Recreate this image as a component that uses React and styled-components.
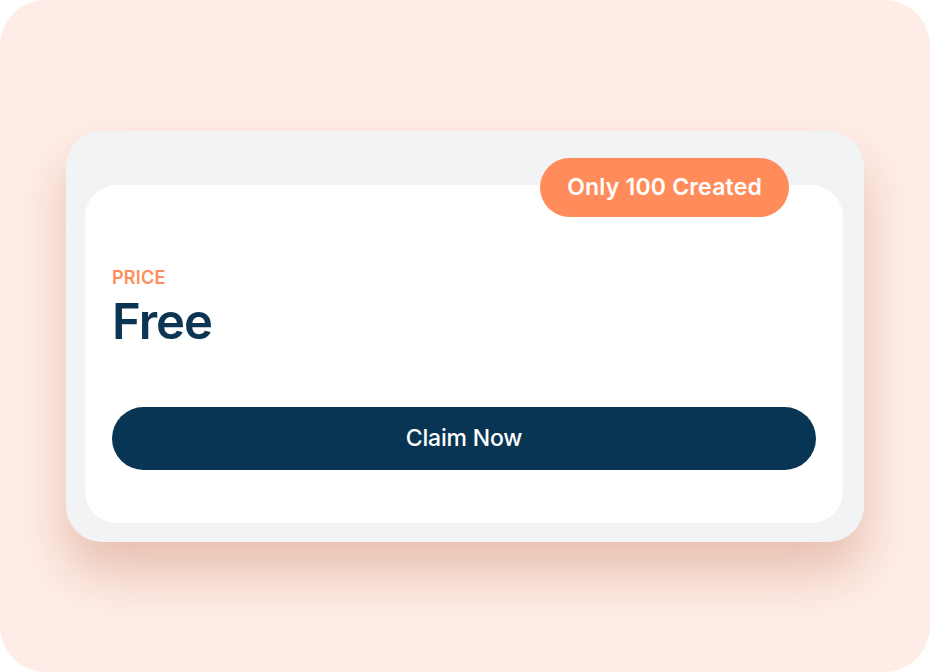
import React from 'react';
import styled, { createGlobalStyle } from 'styled-components';

const GlobalStyle = createGlobalStyle`
    html, body {
        margin: 0;
        padding: 0;
        background: #ffffff;
    }
    * {
        box-sizing: border-box;
    }
`;

const StyledFrame = styled.div`
    width: 930px;
    height: 672px;
    border-radius: 46px;
    background: #feede6;
    display: flex;
    align-items: center;
    justify-content: center;
    font-family: Inter, "Noto Sans", sans-serif;
`;

const StyledCard = styled.div`
    position: relative;
    width: 798px;
    height: 411px;
    padding: 54px 21px 19px 19px;
    border-radius: 36px;
    background: #f2f3f5;
    box-shadow: 0 30px 50px rgba(190, 110, 80, 0.36);
`;

const StyledBadge = styled.span`
    position: absolute;
    top: 27px;
    right: 75px;
    height: 59px;
    padding: 0 27px;
    display: flex;
    align-items: center;
    border-radius: 30px;
    background: #ff8c5a;
    color: #fff;
    font-size: 23px;
    font-weight: 600;
    letter-spacing: 0.2px;
`;

const StyledInner = styled.div`
    height: 100%;
    padding: 82px 27px 53px 27px;
    border-radius: 32px;
    background: #ffffff;
    display: flex;
    flex-direction: column;
`;

const StyledLabel = styled.p`
    margin: 0;
    font-size: 18px;
    line-height: 22px;
    font-weight: 600;
    color: #ff8c5a;
    letter-spacing: 0.2px;
`;

const StyledPrice = styled.p`
    margin: 5px 0 0;
    font-size: 49px;
    line-height: 56px;
    font-weight: 600;
    color: #0c3553;
    letter-spacing: -1px;
`;

const StyledButton = styled.button`
    margin-top: auto;
    width: 100%;
    height: 63px;
    border: none;
    border-radius: 32px;
    background: #083553;
    color: #fff;
    font-family: inherit;
    font-size: 23px;
    font-weight: 500;
    letter-spacing: -0.2px;
    cursor: pointer;
`;

function App() {
    return (
        <>
            <GlobalStyle />
            <StyledFrame>
                <StyledCard>
                    <StyledBadge>Only 100 Created</StyledBadge>
                    <StyledInner>
                        <StyledLabel>PRICE</StyledLabel>
                        <StyledPrice>Free</StyledPrice>
                        <StyledButton>Claim Now</StyledButton>
                    </StyledInner>
                </StyledCard>
            </StyledFrame>
        </>
    );
}

export default App;
